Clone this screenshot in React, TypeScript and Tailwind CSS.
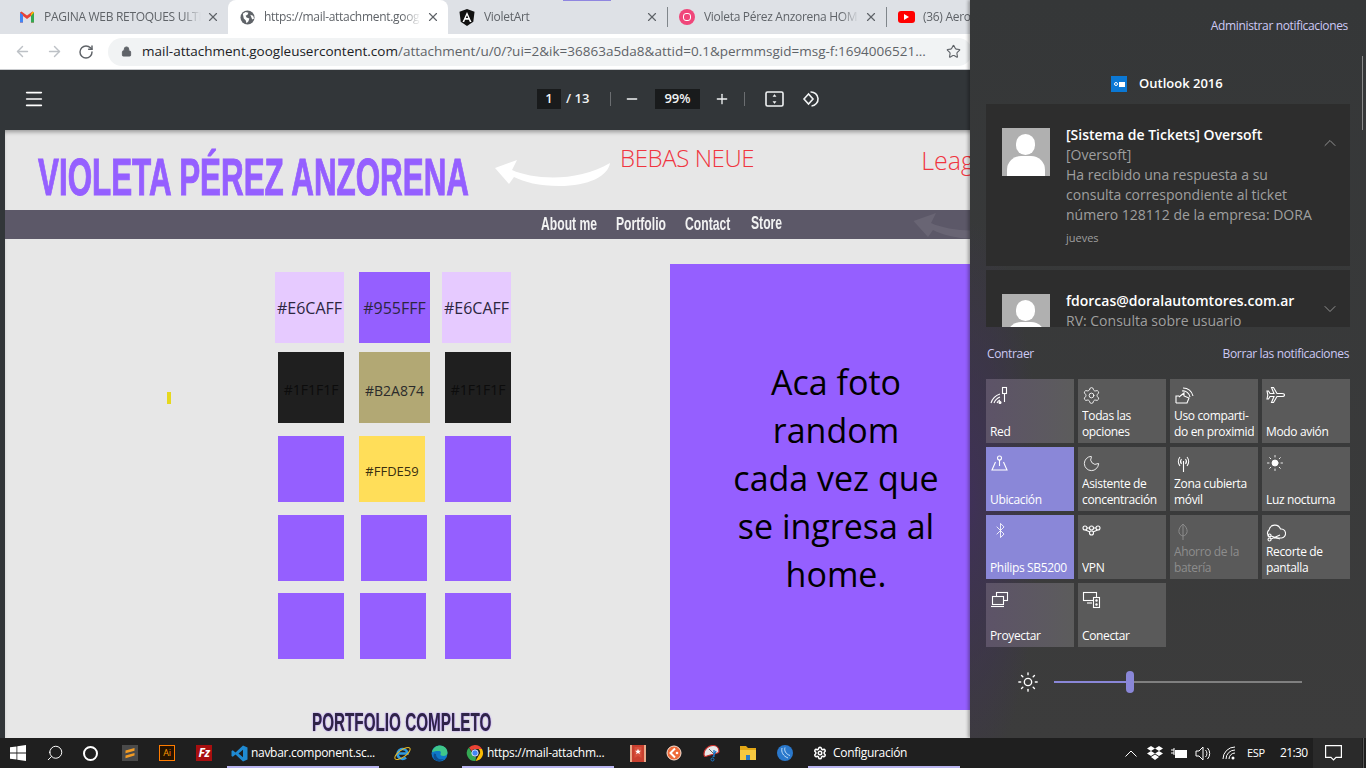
import { Bluetooth, ChevronDown, ChevronUp, Minus, Moon, Plus, RotateCw, Search, Settings, Star, Sun, X, ArrowLeft, ArrowRight, Lock, Menu } from "lucide-react";
import type { ReactNode } from "react";

const ui = "font-['Open_Sans',sans-serif]";

function Gmail() {
    return (
        <svg width="16" height="16" viewBox="0 0 16 16">
            <path d="M1 3.5v10h3V7l4 3 4-3v6.5h3v-10l-1.5-1L8 6.5 2.500 2.500z" fill="#ea4335" />
            <path d="M1 3.500v10h3V6z" fill="#4285f4" />
            <path d="M12 6v7.500h3v-10z" fill="#34a853" />
            <path d="M13.500 2.500 15 3.500 12 7V5z" fill="#fbbc04" />
        </svg>
    );
}

function Globe() {
    return (
        <svg width="15" height="15" viewBox="0 0 16 16">
            <circle cx="8" cy="8" r="7.500" fill="#5f6368" />
            <path d="M3 4l3-2 3 1-1 2-2 1 1 2 3 1-1 3-2 2-1-3-2-2z M11 5l3 1 1 3-2 1z" fill="#fff" />
        </svg>
    );
}

function Angular() {
    return (
        <svg width="16" height="17" viewBox="0 0 16 17">
            <path d="M8 0 .500 2.700l1.200 10L8 17l6.300-4.300 1.200-10z" fill="#111" />
            <path d="M8 3 3.500 13h1.700l.9-2.300h3.800l.9 2.300h1.700zM6.800 9 8 6.200 9.200 9z" fill="#fff" />
        </svg>
    );
}

function Tab({ icon, title, width, active, sep }: { icon: ReactNode; title: string; width: string; active?: boolean; sep?: boolean }) {
    return (
        <div className={`flex h-[34px] shrink-0 items-center ${width} ${active ? "rounded-t-lg bg-white" : ""}`}>
            <div className="flex w-[36px] shrink-0 justify-center pl-[2px]">{icon}</div>
            <div className="flex-1 overflow-hidden whitespace-nowrap text-[12px] tracking-[-0.3px] text-[#5f6368] [mask-image:linear-gradient(to_right,black_88%,transparent)]">{title}</div>
            <X size={14} strokeWidth={2} className="ml-[5px] mr-[8px] shrink-0 text-[#5f6368]" />
            {sep && <div className="h-5 w-px shrink-0 bg-[#80868b]" />}
        </div>
    );
}

function BrowserChrome() {
    return (
        <>
            <div className="relative flex h-[34px] shrink-0 bg-[#dee1e6] pl-[8px]">
                <Tab icon={<Gmail />} title="PAGINA WEB RETOQUES ULTI" width="w-[220px]" />
                <Tab icon={<Globe />} title="https://mail-attachment.goog" width="w-[220px]" active />
                <Tab icon={<Angular />} title="VioletArt" width="w-[220px]" sep />
                <Tab
                    icon={
                        <div className="flex size-4 items-center justify-center rounded-full bg-[#f0467a]">
                            <div className="size-2 rounded-[3px] border-[1.500px] border-white" />
                        </div>
                    }
                    title="Violeta Pérez Anzorena HOM"
                    width="w-[219px]"
                    sep
                />
                <Tab
                    icon={
                        <div className="flex h-3 w-[17px] items-center justify-center rounded-[3px] bg-[#f00]">
                            <div className="size-0 border-y-[3px] border-l-[5px] border-y-transparent border-l-white" />
                        </div>
                    }
                    title="(36) Aero"
                    width="w-[219px]"
                />
                <div className="absolute left-[563px] top-0 h-px w-[48px] bg-[#8f86e0]" />
            </div>
            <div className="flex h-[36px] shrink-0 items-center border-b border-[#c9cbce] bg-white">
                <div className="flex w-[108px] items-center pl-[14px]">
                    <ArrowLeft size={17} strokeWidth={2} className="text-[#bdc1c6]" />
                    <ArrowRight size={17} strokeWidth={2} className="ml-[15px] text-[#bdc1c6]" />
                    <RotateCw size={16} strokeWidth={2.200} className="ml-[15px] text-[#5f6368]" />
                </div>
                <div className={`flex h-[28px] w-[864px] items-center rounded-full bg-[#f1f3f4] pl-[13px] ${ui}`}>
                    <Lock size={11} fill="#5f6368" strokeWidth={2} className="text-[#5f6368]" />
                    <div className="ml-[10px] w-[788px] overflow-hidden whitespace-nowrap text-[13.500px] text-[#5f6368]">
                        <span className="text-[#202124]">mail-attachment.googleusercontent.com</span>/attachment/u/0/?ui=2&amp;ik=36863a5da8&amp;attid=0.1&amp;permmsgid=msg-f:1694006521...
                    </div>
                    <Star size={15} strokeWidth={1.800} className="ml-[16px] text-[#5f6368]" />
                </div>
            </div>
        </>
    );
}

function PdfToolbar() {
    return (
        <div className={`flex h-[60px] shrink-0 items-center bg-[#323639] pb-[2px] text-[13px] font-semibold text-[#f1f3f4] ${ui}`}>
            <Menu size={22} strokeWidth={1.800} className="ml-[23px] text-white" />
            <div className="ml-[492px] flex h-5 w-6 items-center justify-center bg-[#191b1c]">1</div>
            <span className="ml-[5px] w-[25px] whitespace-nowrap">/ 13</span>
            <div className="ml-[19px] h-[14px] w-px bg-[#6b6e71]" />
            <Minus size={16} strokeWidth={2} className="ml-[13px]" />
            <div className="ml-[15px] flex h-5 w-[45px] items-center justify-center bg-[#191b1c]">99%</div>
            <Plus size={16} strokeWidth={2} className="ml-[14px]" />
            <div className="ml-[14px] h-[14px] w-px bg-[#6b6e71]" />
            <svg width="20" height="16" viewBox="0 0 20 16" className="ml-[20px]" fill="none" stroke="#f1f3f4" strokeWidth="1.600">
                <rect x="1" y="1" width="17" height="14" rx="1.500" />
                <path d="M9.500 3.500 8 5.500h3zM9.500 12.500 8 10.500h3z" fill="#f1f3f4" strokeWidth="0.500" />
            </svg>
            <svg width="18" height="18" viewBox="0 0 18 18" className="ml-[17px]" fill="none" stroke="#f1f3f4" strokeWidth="1.600">
                <path d="M6.500 4 2 9l4.500 5L11 9z" />
                <path d="M8.500 2a7 7 0 1 1 1 14" />
            </svg>
        </div>
    );
}

function Swatch({ className, label, text }: { className: string; label?: string; text?: string }) {
    return (
        <div className={`flex shrink-0 items-center justify-center whitespace-nowrap ${text ?? "text-[16px] text-[#2c2640]"} ${className}`}>
            {label}
        </div>
    );
}

function CondensedText({ children, className }: { children: ReactNode; className: string }) {
    return <span className={`inline-block origin-left whitespace-nowrap font-['Liberation_Sans',sans-serif] font-bold ${className}`}>{children}</span>;
}

function PdfPage() {
    return (
        <div className="relative flex min-h-0 flex-1 overflow-hidden bg-[#323639] pl-[5px]">
            <div className="relative w-[1100px] shrink-0 bg-[#e7e7e7] font-['Open_Sans',sans-serif] shadow-[inset_0_4px_4px_-2px_rgba(0,0,0,0.35)]">
                <div className="flex h-[80px]">
                    <div className="w-[490px] pl-[33px] pt-[18px]">
                        <CondensedText className="scale-x-[0.615] text-[51px] leading-[60px] text-[#955fff] [-webkit-text-stroke:1px_#955fff]">VIOLETA PÉREZ ANZORENA</CondensedText>
                    </div>
                    <svg width="120" height="28" viewBox="0 0 120 28" className="absolute left-[489px] top-[30px]">
                        <path d="M1 8 23 0 18 10C40 20 85 22 116 3 114 16 95 26 65 26 45 26 30 22 20 17L15 24z" fill="#fff" />
                    </svg>
                    <div className="ml-[125px] pt-[11px] text-[24px] font-light leading-[33px] tracking-[-0.4px] text-[#f0353f]">BEBAS NEUE</div>
                    <div className="ml-[167px] pt-[13px] text-[25px] font-light leading-[35px] text-[#f0353f]">League</div>
                </div>
                <div className="relative flex h-[29px] items-center bg-[#5c5868] pl-[536px] text-[#f2f2f2]">
                    <CondensedText className="w-[75px] scale-x-[0.64] text-[19px]">About me</CondensedText>
                    <CondensedText className="w-[69px] scale-x-[0.64] text-[19px]">Portfolio</CondensedText>
                    <CondensedText className="w-[66px] scale-x-[0.64] text-[19px]">Contact</CondensedText>
                    <CondensedText className="mb-[3px] w-[40px] scale-x-[0.64] text-[19px]">Store</CondensedText>
                    <svg width="60" height="26" viewBox="0 0 120 52" className="absolute left-[908px] top-[3px]">
                        <path d="M1 16 46 0 36 20C80 40 170 44 232 6 228 32 190 52 130 52 90 52 60 44 40 34L30 48z" fill="#696574" />
                    </svg>
                </div>
                <div className="flex">
                    <div className="ml-[270px] flex w-[236px] flex-col pt-[33px]">
                        <div className="flex h-[71px]">
                            <Swatch className="w-[69px] bg-[#e6caff]" label="#E6CAFF" />
                            <Swatch className="ml-[15px] w-[71px] bg-[#955fff]" label="#955FFF" />
                            <Swatch className="ml-[12px] w-[69px] bg-[#e6caff]" label="#E6CAFF" />
                        </div>
                        <div className="mt-[9px] flex h-[71px]">
                            <Swatch className="ml-[3px] w-[66px] bg-[#1f1f1f] pt-[3px]" label="#1F1F1F" text="text-[14px] text-[#0c0c0c]" />
                            <Swatch className="ml-[15px] w-[71px] bg-[#b2a874] pt-[6px]" label="#B2A874" text="text-[14px] text-[#2b2b2b]" />
                            <Swatch className="ml-[15px] w-[66px] bg-[#1f1f1f] pt-[3px]" label="#1F1F1F" text="text-[14px] text-[#0c0c0c]" />
                        </div>
                        <div className="mt-[13px] flex h-[66px]">
                            <Swatch className="ml-[3px] w-[66px] bg-[#955fff]" />
                            <Swatch className="ml-[15px] w-[66px] bg-[#ffde59] pt-[6px]" label="#FFDE59" text="text-[13px] text-[#3a2f10]" />
                            <Swatch className="ml-[20px] w-[66px] bg-[#955fff]" />
                        </div>
                        <div className="mt-[13px] flex h-[66px]">
                            <Swatch className="ml-[3px] w-[66px] bg-[#955fff]" />
                            <Swatch className="ml-[17px] w-[66px] bg-[#955fff]" />
                            <Swatch className="ml-[18px] w-[66px] bg-[#955fff]" />
                        </div>
                        <div className="mt-[12px] flex h-[66px]">
                            <Swatch className="ml-[3px] w-[66px] bg-[#955fff]" />
                            <Swatch className="ml-[16px] w-[66px] bg-[#955fff]" />
                            <Swatch className="ml-[19px] w-[66px] bg-[#955fff]" />
                        </div>
                        <div className="ml-[37px] mt-[48px] leading-[30px]">
                            <CondensedText className="scale-x-[0.61] text-[25px] text-[#2f2447] [text-shadow:0_0_2px_#955fff]">PORTFOLIO COMPLETO</CondensedText>
                        </div>
                    </div>
                    <div className="ml-[159px] mt-[25px] flex h-[446px] w-[332px] items-center justify-center bg-[#955fff] pb-[18px] text-center text-[34px] leading-[48px] text-black">
                        <div className="whitespace-nowrap">
                            Aca foto
                            <br />
                            random
                            <br />
                            cada vez que
                            <br />
                            se ingresa al
                            <br />
                            home.
                        </div>
                    </div>
                </div>
                <div className="absolute left-[162px] top-[262px] h-[12px] w-1 bg-[#e6d81e]" />
            </div>
        </div>
    );
}

function WinIcon({ children }: { children: ReactNode }) {
    return (
        <svg width="20" height="20" viewBox="0 0 20 20" fill="none" stroke="#fff" strokeWidth="1.100">
            {children}
        </svg>
    );
}

const tiles: { label: ReactNode; icon: ReactNode; on?: boolean; off?: boolean; tint?: boolean }[] = [
    {
        label: "Red",
        tint: true,
        icon: <WinIcon><path d="M1 17a14 14 0 0 1 9-9M4 17a10 10 0 0 1 6-6M7 17a6 6 0 0 1 3-3" /><circle cx="10" cy="16.500" r="1" fill="#fff" /><rect x="12.500" y="1.500" width="4" height="6" /><path d="M14.500 7.500V16" /></WinIcon>,
    },
    { label: <>Todas las<br />opciones</>, icon: <Settings size={19} strokeWidth={1.100} className="text-white" /> },
    {
        label: <>Uso comparti-<br />do en proximid</>,
        icon: <WinIcon><path d="M2 17V10h3M2 17h11l2-5-5-2V7l-5 4" /><path d="M8 5a7 7 0 0 1 8 6M9 2a10 10 0 0 1 10 8" /></WinIcon>,
    },
    {
        label: "Modo avión",
        icon: <WinIcon><path d="M16 7.500c1.500 0 2.500.8 2.500 1.500s-1 1.500-2.500 1.500H11l-3.500 6h-2L8 10.500H4L2.500 13H1l.8-4L1 5h1.500L4 7.500h4L5.500 1.500h2l3.500 6z" /></WinIcon>,
    },
    {
        label: "Ubicación",
        on: true,
        icon: <WinIcon><circle cx="9.500" cy="4" r="2" /><path d="M9.500 6v6M5.500 8 2 16h15l-3.500-8" /></WinIcon>,
    },
    { label: <>Asistente de<br />concentración</>, icon: <Moon size={19} strokeWidth={1.100} className="text-white" /> },
    {
        label: <>Zona cubierta<br />móvil</>,
        icon: <WinIcon><path d="M9.500 7v11M6 3a7 7 0 0 0 0 9M13 3a7 7 0 0 1 0 9M7.500 5a4 4 0 0 0 0 5M11.500 5a4 4 0 0 1 0 5" /></WinIcon>,
    },
    { label: "Luz nocturna", icon: <Sun size={18} strokeWidth={1.200} fill="#fff" className="text-white" /> },
    { label: "Philips SB5200", on: true, icon: <Bluetooth size={17} strokeWidth={1.200} className="ml-[2px] text-white" /> },
    {
        label: "VPN",
        icon: <WinIcon><circle cx="3" cy="6" r="2" /><circle cx="9.500" cy="6" r="2" /><circle cx="16" cy="6" r="2" /><circle cx="9.500" cy="11" r="2" /><path d="M5 6h2.500M11.500 6H14M3.500 8l4.500 2M15.500 8 11 10" /></WinIcon>,
    },
    {
        label: <>Ahorro de la<br />batería</>,
        off: true,
        icon: <svg width="20" height="20" viewBox="0 0 20 20" fill="none" stroke="#8a8a8a" strokeWidth="1"><path d="M9 18V2M9 2c-6 5-5 11 0 12 5-1 6-7 0-12z" /></svg>,
    },
    {
        label: <>Recorte de<br />pantalla</>,
        icon: <WinIcon><path d="M5 15H4.500A4 4 0 0 1 3 8a6 6 0 0 1 11.500-1 4.500 4.500 0 0 1 1 9H8" /><circle cx="3.500" cy="13.500" r="1.500" /><circle cx="3.500" cy="17.500" r="1.500" /><path d="M5 14 14 17M5 17 14 13" /></WinIcon>,
    },
    {
        label: "Proyectar",
        tint: true,
        icon: <WinIcon><rect x="6.500" y="2.500" width="11" height="8" /><rect x="2.500" y="6.500" width="11" height="8" fill="#5f5a66" /><path d="M1 16.500h13" /></WinIcon>,
    },
    {
        label: "Conectar",
        icon: <WinIcon><rect x="1.500" y="2.500" width="13" height="8" /><path d="M5 13h5" /><rect x="11.500" y="7.500" width="6" height="10" fill="#5a5a5a" /><circle cx="14.500" cy="10.500" r=".7" fill="#fff" /><circle cx="14.500" cy="14.500" r=".7" fill="#fff" /></WinIcon>,
    },
];

function Tile({ t }: { t: (typeof tiles)[number] }) {
    const bg = t.on ? "bg-[#8a87d8]" : t.tint ? "bg-gradient-to-r from-[#5d5368] to-[#5c5c5c]" : "bg-[#5a5a5a]";
    return (
        <div className={`flex h-[64px] flex-col overflow-hidden pl-[4px] pt-[7px] ${bg}`}>
            <div className="h-[20px] shrink-0">{t.icon}</div>
            <div className={`mt-auto w-[80px] overflow-hidden whitespace-nowrap pb-[3px] text-[12px] leading-[16px] tracking-[-0.35px] ${t.off ? "text-[#8d8d8d]" : "text-white"}`}>{t.label}</div>
        </div>
    );
}

function Avatar() {
    return (
        <div className="relative size-[48px] shrink-0 overflow-hidden bg-[#b0b0b0]">
            <div className="absolute left-[14px] top-[6px] h-[21px] w-[19px] rounded-full bg-white" />
            <div className="absolute left-[5px] top-[28px] h-[24px] w-[38px] rounded-t-[14px] bg-white" />
        </div>
    );
}

function NotificationPanel() {
    return (
        <div className={`absolute bottom-[30px] right-0 top-0 flex w-[396px] flex-col bg-[#3a3b3b] bg-[radial-gradient(ellipse_70px_280px_at_0%_68%,#3f3157_0%,transparent_100%),linear-gradient(#353738,#3c3c3c)] shadow-[-2px_0_3px_rgba(0,0,0,0.3)] ${ui}`}>
            <div className="mr-[18px] mt-[17px] text-right text-[12px] leading-[18px] tracking-[-0.35px] text-[#cdc9f5]">Administrar notificaciones</div>
            <div className="mt-[40px] flex h-[18px] items-center pl-[141px]">
                <div className="flex size-4 items-center justify-center gap-px bg-[#0b78d4]">
                    <div className="size-[4px] rounded-full border border-white" />
                    <div className="h-[5px] w-[6px] bg-white" />
                </div>
                <span className="ml-[12px] text-[13px] font-semibold text-white">Outlook 2016</span>
            </div>
            <div className="relative mx-[16px] mt-[11px] flex h-[223px] flex-col gap-[4px] overflow-hidden">
                <div className="flex h-[162px] shrink-0 bg-[#2d2d2d] pl-[16px] pt-[24px]">
                    <Avatar />
                    <div className="-mt-[3px] ml-[16px] w-[248px] whitespace-nowrap text-[14px] leading-[20px] text-[#9f9f9f]">
                        <div className="font-semibold text-white">[Sistema de Tickets] Oversoft</div>
                        <div>[Oversoft]</div>
                        <div>Ha recibido una respuesta a su</div>
                        <div>consulta correspondiente al ticket</div>
                        <div>número 128112 de la empresa: DORA</div>
                        <div className="mt-[5px] text-[11px] leading-[16px]">jueves</div>
                    </div>
                    <ChevronUp size={20} strokeWidth={1} className="ml-[6px] mt-[5px] text-[#a5a5a5]" />
                </div>
                <div className="flex h-[100px] shrink-0 bg-[#2d2d2d] pl-[16px] pt-[24px]">
                    <Avatar />
                    <div className="-mt-[3px] ml-[16px] w-[248px] whitespace-nowrap text-[14px] leading-[20px] text-[#9f9f9f]">
                        <div className="font-semibold text-white">fdorcas@doralautomtores.com.ar</div>
                        <div>RV: Consulta sobre usuario</div>
                    </div>
                    <ChevronDown size={20} strokeWidth={1} className="ml-[6px] mt-[5px] text-[#a5a5a5]" />
                </div>
            </div>
            <div className="mx-[17px] mt-[18px] flex justify-between text-[12px] leading-[18px] tracking-[-0.35px]">
                <span className="text-[#cdc9f5]">Contraer</span>
                <span className="text-[#cdc9f5]">Borrar las notificaciones</span>
            </div>
            <div className="ml-[16px] mt-[16px] grid w-[364px] grid-cols-[repeat(4,88px)] gap-[4px]">
                {tiles.map((t, i) => (
                    <Tile key={i} t={t} />
                ))}
            </div>
            <div className="mt-[24px] flex h-[22px] items-center pl-[47px]">
                <Sun size={22} strokeWidth={1.500} className="text-white" />
                <div className="ml-[15px] flex h-[2px] w-[248px] items-center bg-[#808080]">
                    <div className="h-full w-[72px] bg-[#8a87d8]" />
                    <div className="h-[22px] w-2 rounded-full bg-[#8a87d8]" />
                </div>
            </div>
            <div className="absolute right-[3px] top-[56px] h-[74px] w-px bg-[#8a8a8a]" />
        </div>
    );
}

function ChromeLogo() {
    return (
        <svg width="18" height="18" viewBox="0 0 18 18">
            <path d="M9 1a8 8 0 0 1 7 4H9a4 4 0 0 0-3.500 2L3 3.500A8 8 0 0 1 9 1z" fill="#ea4335" />
            <path d="M16 5a8 8 0 0 1-6.500 12L13 11a4 4 0 0 0-.5-6z" fill="#fbbc04" />
            <path d="M3 3.500 6 9a4 4 0 0 0 4 4l-.5 4A8 8 0 0 1 3 3.500z" fill="#34a853" />
            <circle cx="9" cy="9" r="3.200" fill="#4285f4" stroke="#fff" strokeWidth=".8" />
        </svg>
    );
}

function Taskbar() {
    return (
        <div className={`relative z-10 flex h-[30px] shrink-0 items-center bg-[#1f1f1f] text-[12px] tracking-[-0.3px] text-white ${ui}`}>
            <svg width="16" height="16" viewBox="0 0 16 16" className="ml-[10px]" fill="#fff">
                <path d="M0 2.300 6.500 1.400v6.200H0zM7.300 1.300 16 0v7.600H7.300zM0 8.400h6.500v6.200L0 13.700zM7.300 8.400H16V16l-8.700-1.300z" />
            </svg>
            <Search size={18} strokeWidth={1.300} className="ml-[20px] -scale-x-100" />
            <div className="ml-[19px] size-[15px] rounded-full border-[2px] border-white" />
            {/* sublime */}
            <svg width="16" height="16" viewBox="0 0 16 16" className="ml-[24px]">
                <rect width="16" height="16" fill="#4a4a4a" />
                <path d="M3.500 5.500 12.500 3v2.800L3.500 8.300zM3.500 8 12.500 10.500V8L3.500 10.500v2.700l9-2.700" fill="#f29b24" />
            </svg>
            <div className="ml-[21px] flex size-4 items-center justify-center border border-[#ff7c00] bg-[#261300] text-[9px] text-[#ff9a00]">Ai</div>
            <div className="ml-[21px] flex size-4 items-center justify-center bg-[#a80f0f] text-[12px] font-bold italic">Fz</div>
            <div className="ml-[15px] flex h-[30px] w-[152px] items-center border-b-2 border-[#b9b5f0] pl-[4px] pt-[2px]">
                <svg width="17" height="17" viewBox="0 0 17 17">
                    <path d="M12 0.500 16.500 2.500v12L12 16.500 4.500 9.500 1.800 11.700.500 11V6l1.300-.7L4.500 7.500zM12 4.800 7.500 8.500 12 12.200z" fill="#1f8ad2" />
                </svg>
                <span className="ml-[3px] whitespace-nowrap">navbar.component.sc...</span>
            </div>
            {/* internet explorer */}
            <svg width="17" height="17" viewBox="0 0 17 17" fill="none" className="ml-[15px]">
                <path d="M3.500 8.500h10a5 5 0 1 0-1.500 4" stroke="#2f9be0" strokeWidth="2.500" />
                <ellipse cx="8.500" cy="8.500" rx="9" ry="3.500" transform="rotate(-35 8.500 8.500)" stroke="#e8b923" strokeWidth="1" />
            </svg>
            {/* edge */}
            <svg width="17" height="17" viewBox="0 0 17 17" className="ml-[20px]">
                <circle cx="8.500" cy="8.500" r="8" fill="#0f78c8" />
                <path d="M1 7C2 2.500 6 .500 9 .500c4 0 7.500 3 7.500 7 0 2.500-2 3.500-4 3.500-2 0-3.500-.7-3-2 .5-1.500 1-3-2-3C5 6 3 6.500 1 7z" fill="#3fc78a" />
                <path d="M5 9c0 4 3 6 8 5-2 2-5 3-8 1.500C2.500 14 2 11 3 8.500z" fill="#0b4f94" />
            </svg>
            <div className="ml-[14px] flex h-[30px] w-[152px] items-center border-b-2 border-[#b9b5f0] pl-[4px] pt-[2px]">
                <ChromeLogo />
                <span className="ml-[3px] whitespace-nowrap">https://mail-attachm...</span>
            </div>
            {/* wunderlist */}
            <svg width="16" height="17" viewBox="0 0 16 17" className="ml-[16px]">
                <rect width="16" height="17" fill="#e8a98a" />
                <rect x="2" width="12" height="17" fill="#c9402f" />
                <path d="M4.500 2h7v11l-3.500-2-3.500 2z" fill="#d8503c" />
                <path d="M8 3.800l.9 2h2l-1.600 1.400.6 2L8 8.100 6.100 9.200l.6-2L5.100 5.800h2z" fill="#fff" />
            </svg>
            {/* orange ring */}
            <svg width="16" height="16" viewBox="0 0 16 16" fill="none" className="ml-[20px]">
                <circle cx="8" cy="8" r="7" fill="#ef6b3a" stroke="#fbe3d6" strokeWidth="1" />
                <path d="M9 3.500 4.500 8 9 12.500" stroke="#fff" strokeWidth="2" />
                <circle cx="11" cy="8" r="1.300" fill="#fff" />
            </svg>
            {/* dish + scissors */}
            <svg width="17" height="17" viewBox="0 0 17 17" fill="none" className="ml-[21px]">
                <path d="M1 9C1 4 6 .500 10 .500c4 0 6 3 6 6 0 1-1 1.500-3 2C9 9.500 5 10.500 2.500 11.500 1.500 11.500 1 10.500 1 9z" fill="#e8e8e8" stroke="#c9302c" strokeWidth="1.200" />
                <path d="M6 4l5 5" stroke="#666" />
                <path d="M11 5v7M13 6l-3 6" stroke="#1b77c9" strokeWidth="1.300" />
                <circle cx="9.500" cy="14.500" r="1.500" stroke="#1b77c9" />
            </svg>
            <svg width="18" height="16" viewBox="0 0 18 16" className="ml-[19px]">
                <path d="M1 1h6l2 2h8v3H1z" fill="#e4a816" />
                <path d="M1 5h16v10H1z" fill="#f7c940" />
                <path d="M7 10h4v5H7z" fill="#2b7cc9" />
            </svg>
            {/* mikrotik */}
            <svg width="16" height="16" viewBox="0 0 16 16" fill="none" className="ml-[20px]">
                <circle cx="8" cy="8" r="8" fill="#2a78cc" />
                <path d="M5 3c-1 4 1 8 6 10M8 2.500c-1 3 .5 6.500 5 8" stroke="#cfe6fb" strokeWidth=".9" />
            </svg>
            <div className="ml-[15px] flex h-[30px] w-[152px] items-center border-b-2 border-[#b9b5f0] pl-[5px] pt-[2px]">
                <Settings size={14} strokeWidth={2.600} />
                <span className="ml-[6px] whitespace-nowrap">Configuración</span>
            </div>
            <svg width="12" height="7" viewBox="0 0 12 7" className="ml-[165px]" fill="none" stroke="#fff">
                <path d="M.5 6.500 6 1l5.500 5.500" />
            </svg>
            <svg width="16" height="15" viewBox="0 0 16 15" className="ml-[10px]" fill="#fff">
                <path d="M4 0 8 2.500 4 5 0 2.500zM12 0l4 2.500L12 5 8 2.500zM4 5l4 2.500L4 10 0 7.500zM12 5l4 2.500-4 2.500-4-2.500zM4 11l4-2.500 4 2.500-4 3z" />
            </svg>
            <svg width="17" height="12" viewBox="0 0 17 12" className="ml-[8px]" fill="none" stroke="#fff">
                <path d="M0 3h3M0 6h3M3 1v7" />
                <rect x="4.500" y="3.500" width="11" height="7" fill="#fff" />
            </svg>
            <svg width="16" height="15" viewBox="0 0 16 15" className="ml-[7px]" fill="none" stroke="#fff">
                <path d="M1 5h3l4-4v13l-4-4H1zM10.500 4a5 5 0 0 1 0 7M12.500 2a8 8 0 0 1 0 11" />
            </svg>
            <svg width="15" height="14" viewBox="0 0 15 14" className="ml-[11px]" fill="none" stroke="#fff">
                <path d="M1 13a12 12 0 0 1 12-12M4 13a9 9 0 0 1 9-9M7 13a6 6 0 0 1 6-6" />
                <circle cx="11" cy="12" r="1.500" fill="#fff" stroke="none" />
            </svg>
            <span className="ml-[10px] text-[11px]">ESP</span>
            <span className="ml-[15px] text-[12px] tracking-[-0.6px]">21:30</span>
            <div className="ml-[6px] flex h-[30px] w-[49px] items-center bg-[#2a2a2a] pl-[12px]">
                <svg width="17" height="16" viewBox="0 0 17 16" fill="none" stroke="#fff" strokeWidth="1.200">
                    <path d="M.6.600h15.800v11.800H11l-2.500 2.500L6 12.400H.6z" />
                </svg>
            </div>
            <div className="ml-px h-[30px] w-px bg-[#555]" />
        </div>
    );
}

export default function App() {
    return (
        <div className="relative flex h-[768px] w-[1366px] flex-col overflow-hidden bg-[#323639]">
            <div className={ui}>
                <BrowserChrome />
            </div>
            <PdfToolbar />
            <PdfPage />
            <NotificationPanel />
            <Taskbar />
        </div>
    );
}
